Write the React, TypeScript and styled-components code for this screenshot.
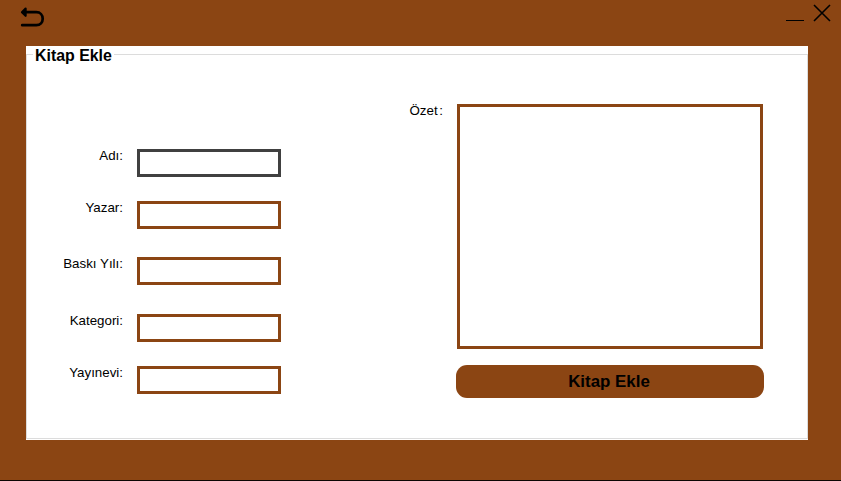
import React from 'react';
import styled, { createGlobalStyle } from 'styled-components';

const brown = '#8b4513';

const GlobalStyle = createGlobalStyle`
  *, *::before, *::after { box-sizing: border-box; }
  body { margin: 0; overflow: hidden; background: ${brown}; }
`;

const Window = styled.main`
  display: flex;
  flex-direction: column;
  width: 841px;
  height: 481px;
  padding: 0 33px 0 26px;
  background: ${brown};
  border-bottom: 1px solid #0c0603;
  color: #000;
  font-family: 'Liberation Sans', Arial, sans-serif;
  font-size: 13.33px;
  line-height: 16px;
`;

const TitleBar = styled.header`
  display: flex;
  justify-content: space-between;
  height: 46px;
  margin: 0 -24px 0 -6px;
  flex: none;
`;

const IconButton = styled.button`
  display: block;
  padding: 0;
  border: 0;
  background: none;
  color: inherit;
  height: 28px;

  svg { display: block; }
`;

const WindowControls = styled.div`
  display: flex;
  gap: 8px;
`;

const Panel = styled.div`
  height: 394px;
  padding-bottom: 1px;
  background: #fff;
`;

const Group = styled.fieldset`
  display: block;
  min-width: 0;
  height: 393px;
  margin: 0;
  padding: 0;
  border: 1px solid #dcdcdc;
`;

const Legend = styled.legend`
  height: 17px;
  margin-left: 6px;
  padding: 1px 2px 0;
  font-size: 15.9px;
  font-weight: bold;
  line-height: 17px;
  white-space: nowrap;
`;

const Form = styled.form`
  display: grid;
  grid-template-columns: 254px 354px;
  column-gap: 129px;
`;

const Fields = styled.div`
  display: grid;
  grid-template-rows: 52px 56px 57px 52px 28px;
  padding-top: 86px;
`;

const Field = styled.label`
  display: grid;
  grid-template-columns: 96px 144px;
  column-gap: 14px;
  align-items: start;
`;

const Caption = styled.span`
  margin-top: -1px;
  text-align: right;
  white-space: nowrap;
`;

const TextInput = styled.input<{ $active?: boolean }>`
  width: 144px;
  height: 28px;
  padding: 2px 4px;
  border: 3px solid ${({ $active }) => ($active ? '#404040' : brown)};
  border-radius: 0;
  outline: 0;
  background: #fff;
  font: inherit;
`;

const Details = styled.div`
  display: flex;
  flex-direction: column;
  align-items: flex-end;
  gap: 16px;
  padding-top: 41px;
`;

const Summary = styled.label`
  display: flex;
  gap: 14px;
  margin-right: 1px;
`;

const SummaryCaption = styled.span`
  margin-top: -1px;
  white-space: nowrap;
  word-spacing: -2px;
`;

const SummaryInput = styled.textarea`
  display: block;
  width: 306px;
  height: 245px;
  padding: 4px;
  border: 3px solid ${brown};
  outline: 0;
  resize: none;
  background: #fff;
  font: inherit;
`;

const SubmitButton = styled.button`
  width: 308px;
  height: 33px;
  padding: 0 2px 0 0;
  border: 0;
  border-radius: 11px;
  background: ${brown};
  color: #000;
  font: bold 16.9px/33px 'Liberation Sans', Arial, sans-serif;
`;

const fields = ['Adı:', 'Yazar:', 'Baskı Yılı:', 'Kategori:', 'Yayınevi:'];

export default function App() {
  return (
    <>
      <GlobalStyle />
      <Window>
        <TitleBar>
          <IconButton type="button" aria-label="Geri">
            <svg width="26" height="28" viewBox="0 0 26 28" fill="none" stroke="currentColor" strokeWidth="2.7" strokeLinecap="round" strokeLinejoin="round">
              <path d="M3 12.2H16.3C20.3 12.2 22.7 15 22.7 18.7S20.3 25.2 16.3 25.2H2.2" />
              <path d="M5.6 8.6L2 12.2L5.6 15.8Z" fill="currentColor" strokeWidth="2.2" />
            </svg>
          </IconButton>
          <WindowControls>
            <IconButton type="button" aria-label="Küçült">
              <svg width="18" height="28" viewBox="0 0 18 28" stroke="currentColor">
                <path d="M0 20.5H18" />
              </svg>
            </IconButton>
            <IconButton type="button" aria-label="Kapat">
              <svg width="20" height="28" viewBox="0 0 20 28" stroke="currentColor" strokeWidth="1.6">
                <path d="M2 5L18 21M18 5L2 21" />
              </svg>
            </IconButton>
          </WindowControls>
        </TitleBar>
        <Panel>
          <Group>
            <Legend>Kitap Ekle</Legend>
            <Form onSubmit={(event) => event.preventDefault()}>
              <Fields>
                {fields.map((caption, index) => (
                  <Field key={caption}>
                    <Caption>{caption}</Caption>
                    <TextInput $active={index === 0} />
                  </Field>
                ))}
              </Fields>
              <Details>
                <Summary>
                  <SummaryCaption>Özet :</SummaryCaption>
                  <SummaryInput />
                </Summary>
                <SubmitButton type="submit">Kitap Ekle</SubmitButton>
              </Details>
            </Form>
          </Group>
        </Panel>
      </Window>
    </>
  );
}
